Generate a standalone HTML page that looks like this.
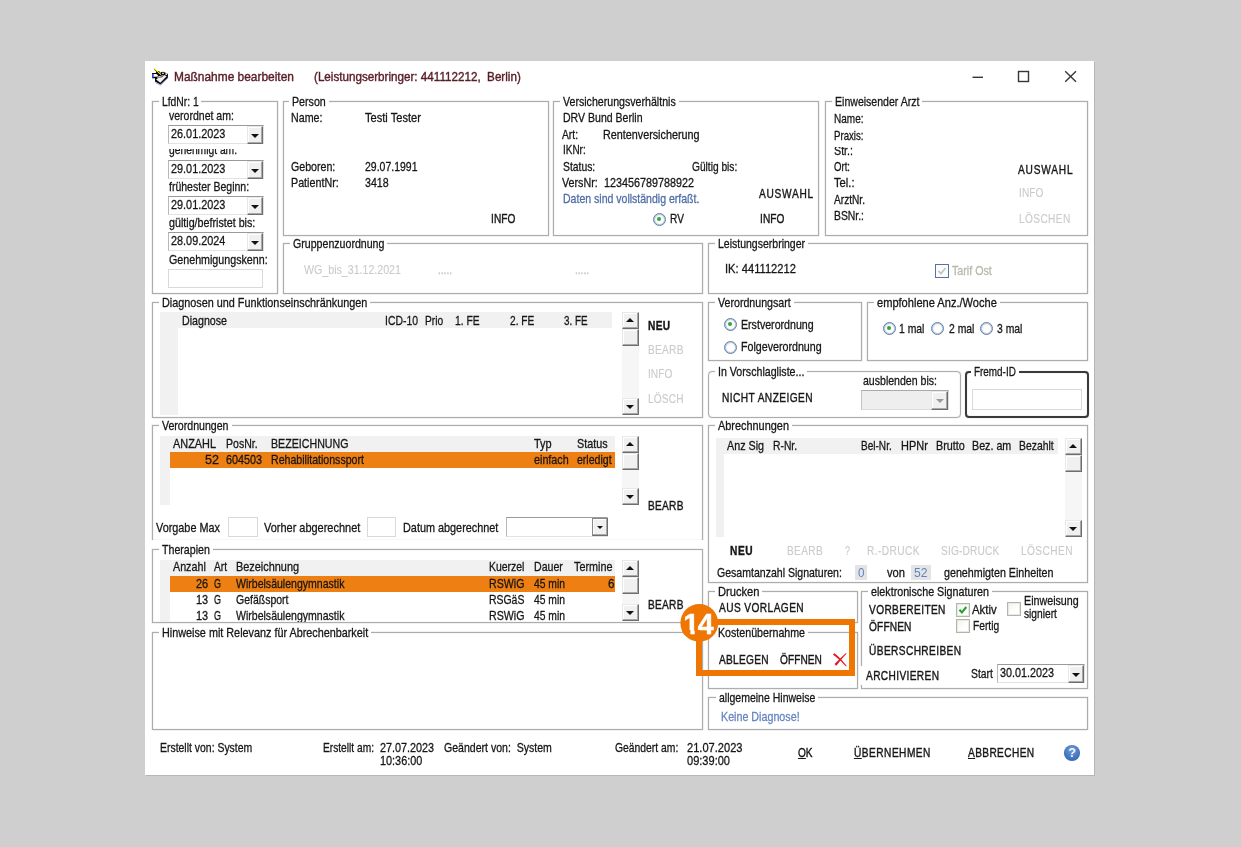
<!DOCTYPE html>
<html><head><meta charset="utf-8"><title>Maßnahme bearbeiten</title>
<style>
html,body{margin:0;padding:0}
body{width:1241px;height:847px;background:#cfcfcf;position:relative;overflow:hidden;font-family:"Liberation Sans",sans-serif;font-size:13px;color:#161616}
.win{position:absolute;left:145px;top:61px;width:949px;height:714px;background:#fff;box-shadow:1px 1px 0 #b6b6b6}
.a{position:absolute}
.t{position:absolute;white-space:nowrap;line-height:16px;height:16px;transform-origin:0 0;font-size:13px;-webkit-text-stroke:0.3px currentColor}
.b{letter-spacing:0.6px;-webkit-text-stroke:0.4px currentColor}
.b.g{-webkit-text-stroke:0.15px currentColor}
.g{color:#cbcbcb}
.bd{font-weight:bold}
.bl{color:#4f6ea6}
.gb{position:absolute;border:1px solid #adadad;box-sizing:border-box;box-shadow:0 0 1px rgba(110,110,110,.55), inset 0 0 1px rgba(110,110,110,.55)}
.gl{position:absolute;background:#fff;height:13px}
.hd{position:absolute;background:#f1f1f1}
.or{position:absolute;background:#ee7f12}
.sbb{position:absolute;box-sizing:border-box;background:#f0f0f0;border-top:1px solid #e8e8e8;border-left:1px solid #e8e8e8;border-right:1px solid #6d6d6d;border-bottom:1px solid #6d6d6d;box-shadow:inset -1px -1px 0 #a8a8a8, inset 1px 1px 0 #fff}
.trk{position:absolute;background:#f6f6f6}
.tb{position:absolute;box-sizing:border-box;border:1px solid #d9d9d9;background:#fff}
.db{position:absolute;box-sizing:border-box;border-top:1px solid #9a9a9a;border-left:1px solid #b8b8b8;border-bottom:1px solid #e2e2e2;border-right:1px solid #e2e2e2;background:#fff}
.arr{position:absolute;width:0;height:0;border-left:4px solid transparent;border-right:4px solid transparent}
.arr.dn{border-top:4px solid #111}
.arr.up{border-bottom:4px solid #111}
.rd{position:absolute;width:13px;height:13px;box-sizing:border-box;border-radius:50%;border:1.6px solid #5e7fa8;box-shadow:inset 0 0 0 1px #b9c8da;background:radial-gradient(circle at 60% 60%, #fff 0, #fff 35%, #dde4ec 100%)}
.rd.on::after{content:"";position:absolute;left:2.9px;top:2.9px;width:4px;height:4px;border-radius:50%;background:#2fa836}
.cb{position:absolute;width:14px;height:14px;box-sizing:border-box;border:1px solid #b3b5a9;box-shadow:inset 0 0 0 1px #e9e9e3;background:linear-gradient(135deg,#f1f1ec,#fff 60%)}
</style></head>
<body>
<div class="win"></div>
<svg class="a" style="left:148px;top:64px" width="24" height="24" viewBox="0 0 24 24">
<path d="M7.4 18.6 L12.5 21.2 L20.3 13.6" stroke="#a3abe6" stroke-width="1" fill="none"/>
<path d="M4 9.1 L7.8 9.1 L8.3 7.5 L10.6 6.9 L12.6 8.2 L15.2 7.8 L17 8.6 L18.6 9.2 L19.9 9.9 L19.9 13.4 L12.5 20.5 L7 17.6 L7 14.2 L4 14.2 Z" fill="#050505"/>
<path d="M5.3 9.9 L8.4 9.9 L10 11.3 L9.4 12.8 L5.3 12.8 Z" fill="#f8f8f8"/>
<path d="M8.1 15.5 L10.6 13.5 L14.2 13.2 L16.2 10.9 L18.7 12.3 L12.3 18.7 Z" fill="#f0f0f0"/>
<path d="M9.2 13.2 C11 12.2 13.5 12.6 15.3 11.6" stroke="#d8d8d8" stroke-width="1" fill="none"/>
<rect x="14.2" y="8.7" width="1.6" height="1.3" fill="#fff"/><rect x="17.4" y="9.4" width="1.6" height="1.5" fill="#fff"/><rect x="11.9" y="8.2" width="0.9" height="0.8" fill="#eee"/>
<rect x="4" y="9.7" width="1.4" height="4.4" fill="#2448cf"/>
<path d="M6.2 5.4 L12.3 11" stroke="#050505" stroke-width="0.9"/>
<path d="M6.1 4.3 L13 10.6" stroke="#fff200" stroke-width="1.05"/>
</svg>
<svg class="a" style="left:965px;top:66px" width="120" height="22" viewBox="0 0 120 22">
<path d="M7.5 11.3 H18" stroke="#36363c" stroke-width="1.4"/>
<rect x="53.5" y="5.5" width="10" height="10" fill="none" stroke="#36363c" stroke-width="1.4"/>
<path d="M100.2 5.3 L111 15.7 M111 5.3 L100.2 15.7" stroke="#36363c" stroke-width="1.4"/>
</svg>
<div class="gb" style="left:152px;top:101px;width:126px;height:193px;"></div>
<div class="gl" style="left:158.8px;top:96px;width:42.7px"></div>
<div class="db" style="left:168px;top:125px;width:96px;height:19px;"></div>
<div class="sbb" style="left:247px;top:126px;width:16px;height:18px;"></div>
<div class="arr dn" style="left:251px;top:134px"></div>
<div class="db" style="left:168px;top:160px;width:96px;height:19px;"></div>
<div class="sbb" style="left:247px;top:161px;width:16px;height:18px;"></div>
<div class="arr dn" style="left:251px;top:169px"></div>
<div class="db" style="left:168px;top:196px;width:96px;height:19px;"></div>
<div class="sbb" style="left:247px;top:197px;width:16px;height:18px;"></div>
<div class="arr dn" style="left:251px;top:205px"></div>
<div class="db" style="left:168px;top:232px;width:96px;height:19px;"></div>
<div class="sbb" style="left:247px;top:233px;width:16px;height:18px;"></div>
<div class="arr dn" style="left:251px;top:241px"></div>
<div class="a" style="left:166px;top:149px;width:100px;height:10px;overflow:hidden" id="clip1"></div>
<div class="tb" style="left:168px;top:269px;width:95px;height:19px;"></div>
<div class="gb" style="left:283px;top:101px;width:266px;height:135px;"></div>
<div class="gl" style="left:289.3px;top:96px;width:39.8px"></div>
<div class="gb" style="left:283px;top:243px;width:420px;height:51px;"></div>
<div class="gl" style="left:289.6px;top:238px;width:97.4px"></div>
<div class="gb" style="left:553px;top:101px;width:266px;height:135px;"></div>
<div class="gl" style="left:560px;top:96px;width:118.8px"></div>
<div class="rd on" style="left:653px;top:213px"></div>
<div class="gb" style="left:825px;top:101px;width:263px;height:135px;"></div>
<div class="gl" style="left:831.5px;top:96px;width:90.5px"></div>
<div class="gb" style="left:708px;top:243px;width:380px;height:51px;"></div>
<div class="gl" style="left:715px;top:238px;width:93px"></div>
<div class="cb" style="left:935px;top:264px;border-color:#5873a3;background:#fcfcfc;box-shadow:none"></div>
<svg class="a" style="left:936px;top:265px" width="11" height="11" viewBox="0 0 11 11"><path d="M2.4 5.9 L4.9 8.6 L9.6 3" stroke="#c3c6bd" stroke-width="1.7" fill="none"/></svg>
<div class="gb" style="left:152px;top:302px;width:551px;height:116px;"></div>
<div class="gl" style="left:159px;top:297px;width:211.3px"></div>
<div class="hd" style="left:160px;top:312px;width:452px;height:16px;"></div>
<div class="hd" style="left:160px;top:312px;width:18px;height:103px;"></div>
<div class="trk" style="left:622px;top:312px;width:17px;height:103px;"></div>
<div class="sbb" style="left:622px;top:312px;width:17px;height:17px;"></div>
<div class="arr up" style="left:626px;top:318px"></div>
<div class="sbb" style="left:622px;top:329px;width:17px;height:17px;"></div>
<div class="sbb" style="left:622px;top:398px;width:17px;height:17px;"></div>
<div class="arr dn" style="left:626px;top:405px"></div>
<div class="gb" style="left:708px;top:302px;width:154px;height:59px;"></div>
<div class="gl" style="left:715px;top:297px;width:78.7px"></div>
<div class="rd on" style="left:724px;top:318px"></div>
<div class="rd" style="left:724px;top:341px"></div>
<div class="gb" style="left:867px;top:302px;width:221px;height:59px;"></div>
<div class="gl" style="left:874.4px;top:297px;width:125.9px"></div>
<div class="rd on" style="left:883px;top:322px"></div>
<div class="rd" style="left:931px;top:322px"></div>
<div class="rd" style="left:980px;top:322px"></div>
<div class="gb" style="left:708px;top:371px;width:253px;height:47px;border-radius:4px"></div>
<div class="gl" style="left:715px;top:366px;width:92.4px"></div>
<div class="a" style="left:861px;top:390px;width:88px;height:20px;box-sizing:border-box;background:#eeeeee;border:1px solid #dcdcdc;border-top-color:#a9a9a9;border-left-color:#c4c4c4"></div>
<div class="sbb" style="left:931px;top:391px;width:17px;height:19px;"></div>
<div class="arr dn" style="left:936px;top:399px;border-top-color:#9a9a9a"></div>
<div class="gb" style="left:965px;top:371px;width:124px;height:47px;border:2px solid #3a3a3a;border-radius:4px"></div>
<div class="gl" style="left:971.2px;top:366px;width:47.8px"></div>
<div class="tb" style="left:972px;top:389px;width:110px;height:21px;"></div>
<div class="a" style="left:152px;top:425px;width:551px;height:115px;box-sizing:border-box;border:1px solid #adadad;border-bottom:none;box-shadow:0 0 1px rgba(110,110,110,.55), inset 0 0 1px rgba(110,110,110,.55);clip-path:inset(-2px -2px 0 -2px)"></div>
<div class="gl" style="left:159px;top:420px;width:73px"></div>
<div class="hd" style="left:160px;top:436px;width:455px;height:16px;"></div>
<div class="hd" style="left:160px;top:436px;width:10px;height:69px;"></div>
<div class="or" style="left:170px;top:452px;width:445px;height:16px;"></div>
<div class="trk" style="left:622px;top:436px;width:17px;height:69px;"></div>
<div class="sbb" style="left:622px;top:436px;width:17px;height:17px;"></div>
<div class="arr up" style="left:626px;top:442px"></div>
<div class="sbb" style="left:622px;top:453px;width:17px;height:17px;"></div>
<div class="sbb" style="left:622px;top:488px;width:17px;height:17px;"></div>
<div class="arr dn" style="left:626px;top:495px"></div>
<div class="tb" style="left:228px;top:517px;width:30px;height:20px;"></div>
<div class="tb" style="left:367px;top:517px;width:29px;height:20px;"></div>
<div class="db" style="left:506px;top:517px;width:102px;height:20px;"></div>
<div class="sbb" style="left:592px;top:518px;width:16px;height:18px;border-top-color:#8a8a8a;border-left-color:#8a8a8a"></div>
<div class="arr dn" style="left:597px;top:526px;border-left-width:3px;border-right-width:3px;border-top-width:3px"></div>
<div class="gb" style="left:152px;top:549px;width:551px;height:74px;"></div>
<div class="gl" style="left:159.4px;top:544px;width:53.9px"></div>
<div class="hd" style="left:160px;top:560px;width:455px;height:16px;"></div>
<div class="hd" style="left:160px;top:560px;width:10px;height:62px;"></div>
<div class="or" style="left:170px;top:576px;width:445px;height:16px;"></div>
<div class="trk" style="left:622px;top:560px;width:17px;height:61px;"></div>
<div class="sbb" style="left:622px;top:560px;width:17px;height:17px;"></div>
<div class="arr up" style="left:626px;top:566px"></div>
<div class="sbb" style="left:622px;top:577px;width:17px;height:17px;"></div>
<div class="sbb" style="left:622px;top:604px;width:17px;height:17px;"></div>
<div class="arr dn" style="left:626px;top:611px"></div>
<div class="gb" style="left:152px;top:632px;width:551px;height:98px;"></div>
<div class="gl" style="left:158.7px;top:627px;width:212.3px"></div>
<div class="gb" style="left:708px;top:425px;width:380px;height:158px;"></div>
<div class="gl" style="left:714.5px;top:420px;width:77px"></div>
<div class="hd" style="left:716px;top:438px;width:342px;height:16px;"></div>
<div class="hd" style="left:716px;top:438px;width:8px;height:99px;"></div>
<div class="trk" style="left:1065px;top:438px;width:17px;height:99px;"></div>
<div class="sbb" style="left:1065px;top:438px;width:17px;height:17px;"></div>
<div class="arr up" style="left:1069px;top:444px"></div>
<div class="sbb" style="left:1065px;top:455px;width:17px;height:17px;"></div>
<div class="sbb" style="left:1065px;top:520px;width:17px;height:17px;"></div>
<div class="arr dn" style="left:1069px;top:527px"></div>
<div class="a" style="left:855px;top:565px;width:12px;height:15px;background:#e4e4e4"></div>
<div class="a" style="left:911px;top:565px;width:20px;height:15px;background:#e4e4e4"></div>
<div class="gb" style="left:708px;top:591px;width:150px;height:32px;"></div>
<div class="gl" style="left:714.7px;top:586px;width:47.4px"></div>
<div class="gb" style="left:708px;top:632px;width:150px;height:57px;"></div>
<div class="gl" style="left:714.7px;top:627px;width:93px"></div>
<svg class="a" style="left:832px;top:652px" width="16" height="16" viewBox="0 0 16 16"><path d="M0.9 2.7 L2.3 1.2 C5 3 8 6 9.3 7.6 C11 9.5 13 12 14.7 14.1 L14.1 14.6 C12 12.6 10 10.3 8.2 8.6 C6 6.5 3.5 4.3 0.9 2.7 Z" fill="#e1161f"/><path d="M2.5 12 L4.3 13.8 C6 11.5 8 9 9.4 7.4 C11 5.6 12.8 3.4 14.6 1.8 L14 1.1 C12 2.8 10 4.8 8.2 6.4 C6.3 8.2 4.5 10 2.5 12 Z" fill="#e1161f"/></svg>
<div class="gb" style="left:861px;top:591px;width:227px;height:98px;"></div>
<div class="gl" style="left:867.9px;top:586px;width:123.9px"></div>
<div class="cb" style="left:956px;top:603px"></div>
<svg class="a" style="left:957px;top:604px" width="12" height="12" viewBox="0 0 12 12"><path d="M2.4 5.7 L4.9 8.4 L9.3 3" stroke="#27a32b" stroke-width="2.1" fill="none"/></svg>
<div class="cb" style="left:1007px;top:602px"></div>
<div class="cb" style="left:956px;top:619px"></div>
<div class="a" style="left:860px;top:666px;width:83px;height:19px;background:#fff"></div>
<div class="db" style="left:997px;top:664px;width:88px;height:19px;"></div>
<div class="sbb" style="left:1068px;top:665px;width:16px;height:18px;"></div>
<div class="arr dn" style="left:1072px;top:673px"></div>
<div class="gb" style="left:708px;top:697px;width:380px;height:33px;"></div>
<div class="gl" style="left:715.8px;top:692px;width:102.3px"></div>
<svg class="a" style="left:1063px;top:744px" width="18" height="18" viewBox="0 0 18 18">
<defs><radialGradient id="hg" cx="50%" cy="30%" r="75%"><stop offset="0" stop-color="#6f9ad8"/><stop offset="1" stop-color="#2f63b4"/></radialGradient></defs>
<circle cx="9" cy="9" r="8.1" fill="url(#hg)"/>
<text x="9" y="13.4" text-anchor="middle" style="font-family:'Liberation Sans',sans-serif;font-weight:bold;font-size:12.5px" fill="#f4f8ff">?</text></svg>
<div class="a" style="left:0;top:0;width:1241px;height:847px;will-change:transform">
<span class="t ti" style="left:174.0px;top:69px;color:#581c26;-webkit-text-stroke:0.4px #581c26;transform:scaleX(0.917);">Maßnahme bearbeiten</span>
<span class="t ti" style="left:313.9px;top:69px;color:#581c26;-webkit-text-stroke:0.4px #581c26;transform:scaleX(0.896);">(Leistungserbringer: 441112212,&nbsp; Berlin)</span>
<span class="t " style="left:161.8px;top:94px;transform:scaleX(0.794);">LfdNr: 1</span>
<span class="t " style="left:168.6px;top:108px;transform:scaleX(0.809);">verordnet am:</span>
<span class="t " style="left:170.6px;top:126px;transform:scaleX(0.836);">26.01.2023</span>
<span class="t " style="left:170.6px;top:161px;transform:scaleX(0.836);">29.01.2023</span>
<span class="t " style="left:170.6px;top:197px;transform:scaleX(0.836);">29.01.2023</span>
<span class="t " style="left:170.6px;top:233px;transform:scaleX(0.836);">28.09.2024</span>
<div class="a" style="left:0;top:149px;width:1241px;height:9px;overflow:hidden"><div class="a" style="left:0;top:-149px"><span class="t " style="left:168.6px;top:142px;transform:scaleX(0.791);">genehmigt am:</span></div></div>
<span class="t " style="left:168.7px;top:179px;transform:scaleX(0.809);">frühester Beginn:</span>
<span class="t " style="left:168.7px;top:215px;transform:scaleX(0.824);">gültig/befristet bis:</span>
<span class="t " style="left:168.7px;top:252px;transform:scaleX(0.822);">Genehmigungskenn:</span>
<span class="t " style="left:292.3px;top:94px;transform:scaleX(0.820);">Person</span>
<span class="t " style="left:291.3px;top:110px;transform:scaleX(0.820);">Name:</span>
<span class="t " style="left:365.0px;top:110px;transform:scaleX(0.853);">Testi Tester</span>
<span class="t " style="left:291.3px;top:159px;transform:scaleX(0.817);">Geboren:</span>
<span class="t " style="left:365.0px;top:159px;transform:scaleX(0.807);">29.07.1991</span>
<span class="t " style="left:291.3px;top:175px;transform:scaleX(0.825);">PatientNr:</span>
<span class="t " style="left:365.0px;top:175px;transform:scaleX(0.819);">3418</span>
<span class="t b" style="left:491.0px;top:211px;letter-spacing:0.12px;transform:scaleX(0.780);">INFO</span>
<span class="t " style="left:292.6px;top:236px;transform:scaleX(0.816);">Gruppenzuordnung</span>
<span class="t " style="left:304.4px;top:262px;color:#cacaca;-webkit-text-stroke:0.1px #cacaca;transform:scaleX(0.818);">WG_bis_31.12.2021</span>
<span class="t " style="left:438.0px;top:262px;color:#c4c4c4;transform:scaleX(0.775);">.....</span>
<span class="t " style="left:575.4px;top:262px;color:#c4c4c4;transform:scaleX(0.775);">.....</span>
<span class="t " style="left:563.0px;top:94px;transform:scaleX(0.817);">Versicherungsverhältnis</span>
<span class="t " style="left:563.0px;top:110px;transform:scaleX(0.811);">DRV Bund Berlin</span>
<span class="t " style="left:561.5px;top:127px;transform:scaleX(0.791);">Art:</span>
<span class="t " style="left:602.9px;top:127px;transform:scaleX(0.829);">Rentenversicherung</span>
<span class="t " style="left:563.0px;top:142px;transform:scaleX(0.766);">IKNr:</span>
<span class="t " style="left:563.0px;top:159px;transform:scaleX(0.796);">Status:</span>
<span class="t " style="left:692.0px;top:159px;transform:scaleX(0.782);">Gültig bis:</span>
<span class="t " style="left:561.5px;top:175px;transform:scaleX(0.824);">VersNr:</span>
<span class="t " style="left:604.0px;top:175px;transform:scaleX(0.830);">123456789788922</span>
<span class="t bl" style="left:563.0px;top:191px;transform:scaleX(0.810);">Daten sind vollständig erfaßt.</span>
<span class="t b" style="left:759.0px;top:186px;letter-spacing:0.96px;transform:scaleX(0.780);">AUSWAHL</span>
<span class="t " style="left:670.0px;top:211px;transform:scaleX(0.780);">RV</span>
<span class="t b" style="left:760.0px;top:211px;letter-spacing:0.09px;transform:scaleX(0.780);">INFO</span>
<span class="t " style="left:834.5px;top:94px;transform:scaleX(0.812);">Einweisender Arzt</span>
<span class="t " style="left:834.0px;top:111px;transform:scaleX(0.770);">Name:</span>
<span class="t " style="left:834.0px;top:128px;transform:scaleX(0.742);">Praxis:</span>
<div class="a" style="left:0;top:147.2px;width:1241px;height:12.800000000000011px;overflow:hidden"><div class="a" style="left:0;top:-147.2px"><span class="t " style="left:834.0px;top:143px;transform:scaleX(0.822);">Str.:</span></div></div>
<span class="t " style="left:834.0px;top:159px;transform:scaleX(0.738);">Ort:</span>
<span class="t " style="left:834.0px;top:175px;transform:scaleX(0.860);">Tel.:</span>
<span class="t " style="left:834.0px;top:192px;transform:scaleX(0.780);">ArztNr.</span>
<span class="t " style="left:834.0px;top:208px;transform:scaleX(0.798);">BSNr.:</span>
<span class="t b" style="left:1018.3px;top:162px;letter-spacing:1.03px;transform:scaleX(0.780);">AUSWAHL</span>
<span class="t b g" style="left:1018.6px;top:185px;letter-spacing:0.12px;transform:scaleX(0.780);">INFO</span>
<span class="t b g" style="left:1018.6px;top:211px;letter-spacing:0.47px;transform:scaleX(0.780);">LÖSCHEN</span>
<span class="t " style="left:718.0px;top:236px;transform:scaleX(0.808);">Leistungserbringer</span>
<span class="t " style="left:724.5px;top:261px;transform:scaleX(0.858);">IK: 441112212</span>
<span class="t " style="left:952.3px;top:263px;color:#b7b9a9;transform:scaleX(0.822);">Tarif Ost</span>
<span class="t " style="left:162.0px;top:295px;transform:scaleX(0.833);">Diagnosen und Funktionseinschränkungen</span>
<span class="t " style="left:182.0px;top:313px;transform:scaleX(0.819);">Diagnose</span>
<span class="t " style="left:384.5px;top:313px;transform:scaleX(0.801);">ICD-10</span>
<span class="t " style="left:424.6px;top:313px;transform:scaleX(0.783);">Prio</span>
<span class="t " style="left:455.4px;top:313px;transform:scaleX(0.792);">1. FE</span>
<span class="t " style="left:509.5px;top:313px;transform:scaleX(0.779);">2. FE</span>
<span class="t " style="left:563.8px;top:313px;transform:scaleX(0.759);">3. FE</span>
<span class="t b bd" style="left:647.6px;top:318px;letter-spacing:0.47px;transform:scaleX(0.780);">NEU</span>
<span class="t b g" style="left:647.6px;top:342px;letter-spacing:0.34px;transform:scaleX(0.780);">BEARB</span>
<span class="t b g" style="left:647.6px;top:366px;letter-spacing:0.03px;transform:scaleX(0.780);">INFO</span>
<span class="t b g" style="left:647.6px;top:391px;letter-spacing:0.19px;transform:scaleX(0.780);">LÖSCH</span>
<span class="t " style="left:718.0px;top:295px;transform:scaleX(0.818);">Verordnungsart</span>
<span class="t " style="left:741.4px;top:317px;transform:scaleX(0.817);">Erstverordnung</span>
<span class="t " style="left:741.4px;top:339px;transform:scaleX(0.820);">Folgeverordnung</span>
<span class="t " style="left:877.4px;top:295px;transform:scaleX(0.852);">empfohlene Anz./Woche</span>
<span class="t " style="left:899.2px;top:321px;transform:scaleX(0.799);">1 mal</span>
<span class="t " style="left:948.8px;top:321px;transform:scaleX(0.799);">2 mal</span>
<span class="t " style="left:997.3px;top:321px;transform:scaleX(0.799);">3 mal</span>
<span class="t " style="left:718.0px;top:364px;transform:scaleX(0.819);">In Vorschlagliste...</span>
<span class="t b" style="left:722.0px;top:390px;letter-spacing:0.56px;transform:scaleX(0.780);">NICHT ANZEIGEN</span>
<span class="t " style="left:862.5px;top:373px;transform:scaleX(0.812);">ausblenden bis:</span>
<span class="t " style="left:974.2px;top:364px;transform:scaleX(0.762);">Fremd-ID</span>
<span class="t " style="left:162.0px;top:418px;transform:scaleX(0.813);">Verordnungen</span>
<span class="t " style="left:173.0px;top:436px;transform:scaleX(0.838);">ANZAHL</span>
<span class="t " style="left:225.6px;top:436px;transform:scaleX(0.810);">PosNr.</span>
<span class="t " style="left:270.5px;top:436px;transform:scaleX(0.819);">BEZEICHNUNG</span>
<span class="t " style="left:534.3px;top:436px;transform:scaleX(0.844);">Typ</span>
<span class="t " style="left:577.4px;top:436px;transform:scaleX(0.830);">Status</span>
<span class="t " style="left:205.0px;top:452px;transform:scaleX(0.968);">52</span>
<span class="t " style="left:225.6px;top:452px;transform:scaleX(0.830);">604503</span>
<span class="t " style="left:270.5px;top:452px;transform:scaleX(0.814);">Rehabilitationssport</span>
<span class="t " style="left:534.3px;top:452px;transform:scaleX(0.828);">einfach</span>
<span class="t " style="left:577.4px;top:452px;transform:scaleX(0.811);">erledigt</span>
<span class="t b" style="left:647.6px;top:498px;letter-spacing:0.34px;transform:scaleX(0.780);">BEARB</span>
<span class="t " style="left:156.2px;top:520px;transform:scaleX(0.835);">Vorgabe Max</span>
<span class="t " style="left:263.7px;top:520px;transform:scaleX(0.843);">Vorher abgerechnet</span>
<span class="t " style="left:402.8px;top:520px;transform:scaleX(0.835);">Datum abgerechnet</span>
<span class="t " style="left:162.4px;top:542px;transform:scaleX(0.818);">Therapien</span>
<span class="t " style="left:173.4px;top:559px;transform:scaleX(0.825);">Anzahl</span>
<span class="t " style="left:214.1px;top:559px;transform:scaleX(0.782);">Art</span>
<span class="t " style="left:235.9px;top:559px;transform:scaleX(0.839);">Bezeichnung</span>
<span class="t " style="left:488.8px;top:559px;transform:scaleX(0.803);">Kuerzel</span>
<span class="t " style="left:534.3px;top:559px;transform:scaleX(0.816);">Dauer</span>
<span class="t " style="left:573.5px;top:559px;transform:scaleX(0.832);">Termine</span>
<span class="t " style="left:195.9px;top:576px;transform:scaleX(0.843);">26</span>
<span class="t " style="left:214.4px;top:576px;transform:scaleX(0.691);">G</span>
<span class="t " style="left:235.9px;top:576px;transform:scaleX(0.811);">Wirbelsäulengymnastik</span>
<span class="t " style="left:488.8px;top:576px;transform:scaleX(0.817);">RSWiG</span>
<span class="t " style="left:534.3px;top:576px;transform:scaleX(0.794);">45 min</span>
<span class="t " style="left:607.5px;top:576px;transform:scaleX(0.898);">6</span>
<span class="t " style="left:195.9px;top:592px;transform:scaleX(0.843);">13</span>
<span class="t " style="left:214.4px;top:592px;transform:scaleX(0.691);">G</span>
<span class="t " style="left:235.9px;top:592px;transform:scaleX(0.807);">Gefäßsport</span>
<span class="t " style="left:488.8px;top:592px;transform:scaleX(0.803);">RSGäS</span>
<span class="t " style="left:534.3px;top:592px;transform:scaleX(0.794);">45 min</span>
<div class="a" style="left:0;top:607px;width:1241px;height:15px;overflow:hidden"><div class="a" style="left:0;top:-607px"><span class="t " style="left:195.9px;top:608px;transform:scaleX(0.843);">13</span></div></div>
<div class="a" style="left:0;top:607px;width:1241px;height:15px;overflow:hidden"><div class="a" style="left:0;top:-607px"><span class="t " style="left:214.4px;top:608px;transform:scaleX(0.691);">G</span></div></div>
<div class="a" style="left:0;top:607px;width:1241px;height:15px;overflow:hidden"><div class="a" style="left:0;top:-607px"><span class="t " style="left:235.9px;top:608px;transform:scaleX(0.811);">Wirbelsäulengymnastik</span></div></div>
<div class="a" style="left:0;top:607px;width:1241px;height:15px;overflow:hidden"><div class="a" style="left:0;top:-607px"><span class="t " style="left:488.8px;top:608px;transform:scaleX(0.817);">RSWiG</span></div></div>
<div class="a" style="left:0;top:607px;width:1241px;height:15px;overflow:hidden"><div class="a" style="left:0;top:-607px"><span class="t " style="left:534.3px;top:608px;transform:scaleX(0.794);">45 min</span></div></div>
<span class="t b" style="left:647.6px;top:597px;letter-spacing:0.34px;transform:scaleX(0.780);">BEARB</span>
<span class="t " style="left:161.7px;top:625px;transform:scaleX(0.832);">Hinweise mit Relevanz für Abrechenbarkeit</span>
<span class="t " style="left:717.5px;top:418px;transform:scaleX(0.839);">Abrechnungen</span>
<span class="t " style="left:727.4px;top:438px;transform:scaleX(0.826);">Anz Sig</span>
<span class="t " style="left:772.7px;top:438px;transform:scaleX(0.794);">R-Nr.</span>
<span class="t " style="left:860.9px;top:438px;transform:scaleX(0.773);">Bel-Nr.</span>
<span class="t " style="left:900.5px;top:438px;transform:scaleX(0.843);">HPNr</span>
<span class="t " style="left:935.5px;top:438px;transform:scaleX(0.830);">Brutto</span>
<span class="t " style="left:971.9px;top:438px;transform:scaleX(0.824);">Bez. am</span>
<span class="t " style="left:1018.8px;top:438px;transform:scaleX(0.800);">Bezahlt</span>
<span class="t b bd" style="left:729.5px;top:543px;letter-spacing:0.81px;transform:scaleX(0.780);">NEU</span>
<span class="t b g" style="left:786.7px;top:543px;letter-spacing:0.44px;transform:scaleX(0.780);">BEARB</span>
<span class="t b g" style="left:844.6px;top:543px;letter-spacing:0.00px;transform:scaleX(0.690);">?</span>
<span class="t b g" style="left:867.0px;top:543px;letter-spacing:0.55px;transform:scaleX(0.780);">R.-DRUCK</span>
<span class="t b g" style="left:941.0px;top:543px;letter-spacing:0.23px;transform:scaleX(0.780);">SIG-DRUCK</span>
<span class="t b g" style="left:1021.3px;top:543px;letter-spacing:0.54px;transform:scaleX(0.780);">LÖSCHEN</span>
<span class="t " style="left:717.4px;top:565px;transform:scaleX(0.811);">Gesamtanzahl Signaturen:</span>
<span class="t " style="left:857.6px;top:565px;color:#5f83c4;-webkit-text-stroke:0;transform:scaleX(0.898);">0</span>
<span class="t " style="left:887.2px;top:565px;transform:scaleX(0.858);">von</span>
<span class="t " style="left:913.5px;top:565px;color:#5f83c4;-webkit-text-stroke:0;transform:scaleX(0.933);">52</span>
<span class="t " style="left:944.0px;top:565px;transform:scaleX(0.823);">genehmigten Einheiten</span>
<span class="t " style="left:717.7px;top:584px;transform:scaleX(0.855);">Drucken</span>
<span class="t b" style="left:719.3px;top:600px;letter-spacing:0.54px;transform:scaleX(0.780);">AUS VORLAGEN</span>
<span class="t " style="left:717.7px;top:625px;transform:scaleX(0.819);">Kostenübernahme</span>
<span class="t b" style="left:719.3px;top:652px;letter-spacing:0.38px;transform:scaleX(0.780);">ABLEGEN</span>
<span class="t b" style="left:780.1px;top:652px;letter-spacing:0.05px;transform:scaleX(0.780);">ÖFFNEN</span>
<span class="t " style="left:870.9px;top:584px;transform:scaleX(0.824);">elektronische Signaturen</span>
<span class="t b" style="left:868.5px;top:602px;letter-spacing:0.48px;transform:scaleX(0.780);">VORBEREITEN</span>
<span class="t " style="left:972.4px;top:602px;transform:scaleX(0.877);">Aktiv</span>
<span class="t " style="left:1024.2px;top:593px;transform:scaleX(0.823);">Einweisung</span>
<span class="t " style="left:1024.2px;top:606px;transform:scaleX(0.785);">signiert</span>
<span class="t b" style="left:868.5px;top:619px;letter-spacing:0.19px;transform:scaleX(0.780);">ÖFFNEN</span>
<span class="t " style="left:973.0px;top:618px;transform:scaleX(0.785);">Fertig</span>
<span class="t b" style="left:868.5px;top:643px;letter-spacing:0.51px;transform:scaleX(0.780);">ÜBERSCHREIBEN</span>
<span class="t b" style="left:866.2px;top:668px;letter-spacing:0.47px;transform:scaleX(0.780);">ARCHIVIEREN</span>
<span class="t " style="left:971.0px;top:666px;transform:scaleX(0.797);">Start</span>
<span class="t " style="left:999.7px;top:665px;transform:scaleX(0.831);">30.01.2023</span>
<span class="t " style="left:718.8px;top:690px;transform:scaleX(0.808);">allgemeine Hinweise</span>
<span class="t " style="left:720.9px;top:709px;color:#6785c0;transform:scaleX(0.824);">Keine Diagnose!</span>
<span class="t " style="left:160.0px;top:740px;transform:scaleX(0.803);">Erstellt von: System</span>
<span class="t " style="left:323.0px;top:740px;transform:scaleX(0.784);">Erstellt am:</span>
<span class="t " style="left:379.7px;top:740px;transform:scaleX(0.831);">27.07.2023</span>
<span class="t " style="left:379.7px;top:753px;transform:scaleX(0.836);">10:36:00</span>
<span class="t " style="left:444.2px;top:740px;transform:scaleX(0.811);">Geändert von:&nbsp; System</span>
<span class="t " style="left:614.9px;top:740px;transform:scaleX(0.797);">Geändert am:</span>
<span class="t " style="left:686.9px;top:740px;transform:scaleX(0.853);">21.07.2023</span>
<span class="t " style="left:686.9px;top:753px;transform:scaleX(0.850);">09:39:00</span>
<span class="t b" style="left:797.8px;top:745px;letter-spacing:0.00px;transform:scaleX(0.777);"><u>O</u>K</span>
<span class="t b" style="left:854.3px;top:745px;letter-spacing:0.61px;transform:scaleX(0.780);"><u>Ü</u>BERNEHMEN</span>
<span class="t b" style="left:967.6px;top:745px;letter-spacing:0.48px;transform:scaleX(0.780);"><u>A</u>BBRECHEN</span>
</div>
<div class="a" style="left:696px;top:619px;width:159px;height:57px;box-sizing:border-box;border:6px solid #ee7601"></div>
<svg class="a" style="left:678px;top:602px" width="44" height="44" viewBox="0 0 44 44"><circle cx="21.3" cy="20.9" r="18.9" fill="#ee7601"/>
<text x="19.8" y="32.3" text-anchor="middle" style="font-family:'Liberation Sans',sans-serif;font-weight:bold;font-size:28.6px;letter-spacing:-1.3px" fill="#fff" stroke="#fff" stroke-width="0.5">14</text><clipPath id="mc"><circle cx="21.3" cy="20.9" r="18.9"/></clipPath><g clip-path="url(#mc)"><rect x="1" y="28" width="11.4" height="5.5" fill="#ee7601"/><rect x="16.72" y="28" width="5.1" height="5.5" fill="#ee7601"/></g></svg>
</body></html>
